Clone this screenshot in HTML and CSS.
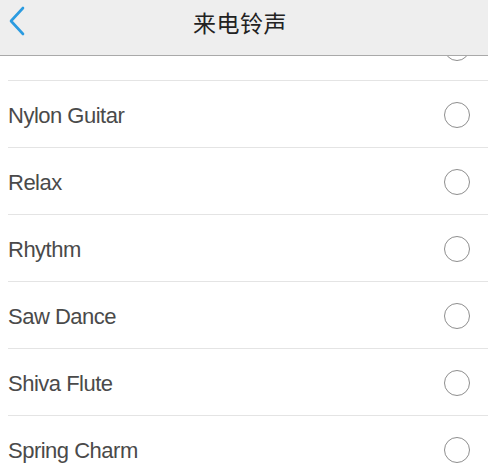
FILE: index.html
```html
<!DOCTYPE html>
<html lang="zh-CN">
<head>
    <meta charset="UTF-8">
    <meta name="viewport" content="width=device-width, initial-scale=1.0">
    <title>来电铃声</title>
    <link rel="stylesheet" href="styles.css">
</head>
<body>
    <header class="navbar">
        <a class="back" href="#">
            <svg width="20" height="30" viewBox="0 0 20 30">
                <path d="M15 2 L3 15 L15 28" fill="none" stroke="#2b9be0" stroke-width="2.6" stroke-linecap="round" stroke-linejoin="round"/>
            </svg>
        </a>
        <h1 class="title">来电铃声</h1>
    </header>

    <div class="scroller">
        <ul class="ringtones">
            <!-- row scrolled mostly under the header -->
            <li class="row"><span class="name"></span><span class="radio"></span></li>
            <li class="row"><span class="name">Nylon Guitar</span><span class="radio"></span></li>
            <li class="row"><span class="name">Relax</span><span class="radio"></span></li>
            <li class="row"><span class="name">Rhythm</span><span class="radio"></span></li>
            <li class="row"><span class="name">Saw Dance</span><span class="radio"></span></li>
            <li class="row"><span class="name">Shiva Flute</span><span class="radio"></span></li>
            <li class="row"><span class="name">Spring Charm</span><span class="radio"></span></li>
        </ul>
    </div>
</body>
</html>
```

FILE: styles.css
```css
html, body {
    margin: 0;
    padding: 0;
}
body {
    width: 488px;
    height: 476px;
    display: flex;
    flex-direction: column;
    overflow: hidden;
    background-color: #fff;
    font-family: "Liberation Sans", Arial, "Noto Sans CJK SC", sans-serif;
}
.navbar {
    flex: none;
    height: 55px;
    border-bottom: 1px solid #a9a9a9;
    background-color: #eeeeee;
    display: flex;
    align-items: center;
    justify-content: center;
    position: relative;
}
.back {
    position: absolute;
    left: 8px;
    top: 6px;
    display: block;
    width: 20px;
    height: 30px;
}
.title {
    margin: 0 8px 0 0;
    padding-bottom: 11px;
    font-family: "Noto Sans CJK SC", sans-serif;
    font-size: 23px;
    font-weight: normal;
    color: #222;
    letter-spacing: 0.5px;
}
.scroller {
    flex: 1;
    overflow: hidden;
}
.ringtones {
    list-style: none;
    margin: -42px 0 0 0;
    padding: 0;
}
.row {
    height: 66px;
    margin-left: 8px;
    border-bottom: 1px solid #e4e4e4;
    display: flex;
    align-items: center;
    justify-content: space-between;
    padding-right: 18px;
}
.name {
    font-size: 22px;
    letter-spacing: -0.5px;
    color: #4a4a4a;
    padding-top: 4px;
}
.radio {
    width: 24px;
    height: 24px;
    border: 1.6px solid #8e8e8e;
    border-radius: 50%;
    margin-top: 2px;
}
```
